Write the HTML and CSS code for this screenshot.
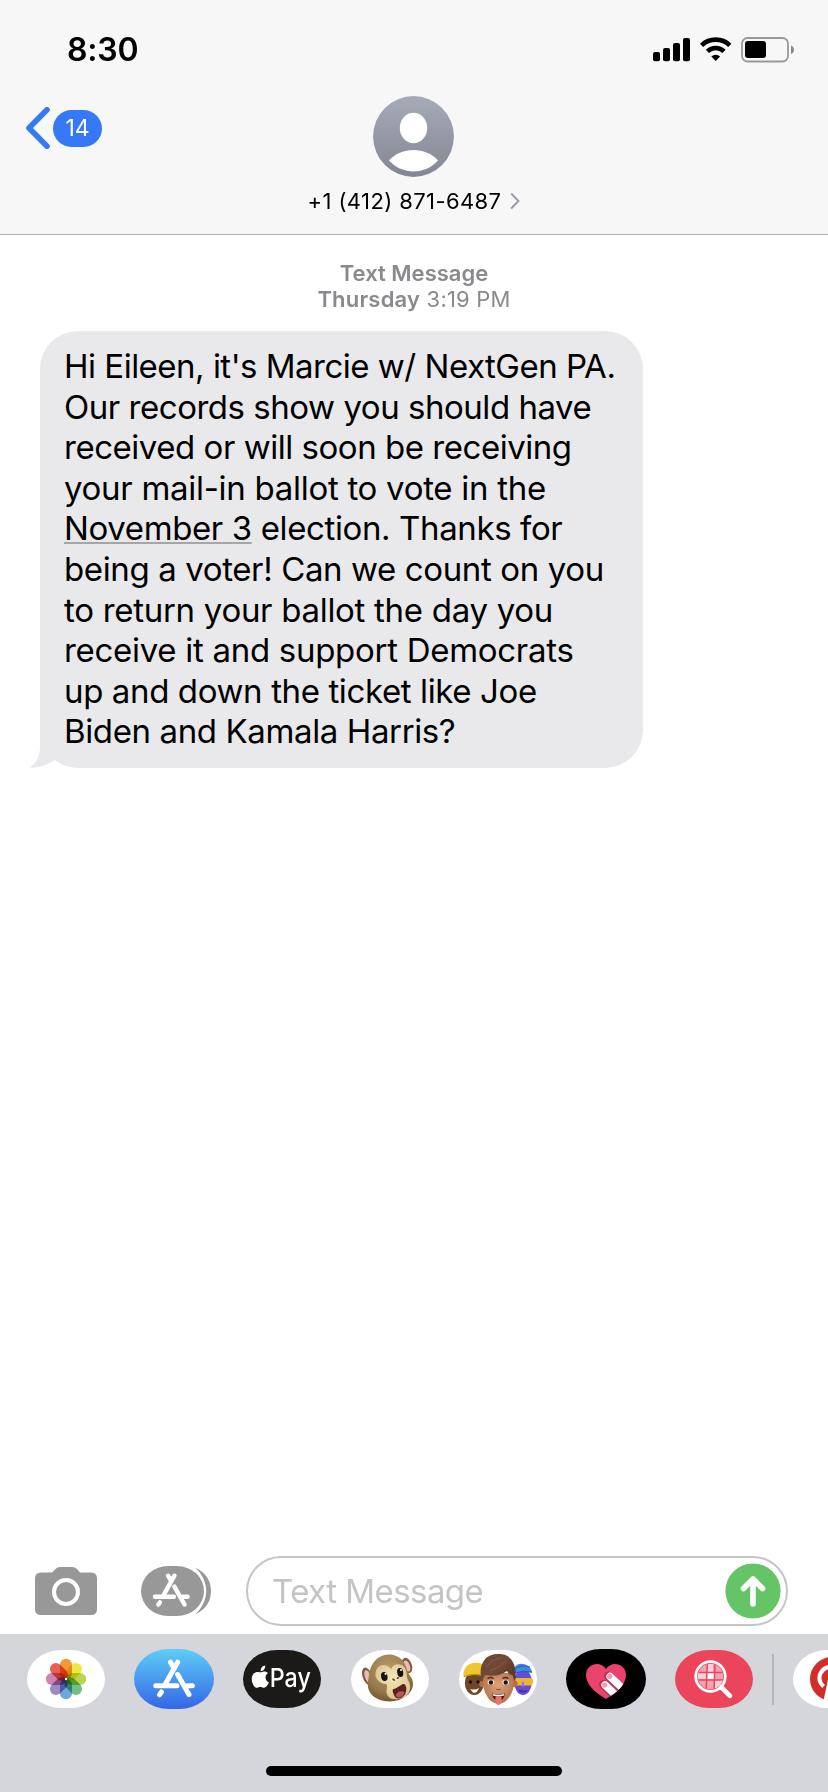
FILE: index.html
```html
<!DOCTYPE html>
<html lang="en">
<head>
<meta charset="utf-8">
<title>Messages</title>
<link rel="stylesheet" href="styles.css">
</head>
<body>
<svg width="0" height="0" class="defs">
  <defs>
    <linearGradient id="blue" x1="0" y1="0" x2="0" y2="1"><stop offset="0" stop-color="#60cdf7"/><stop offset="1" stop-color="#3466e6"/></linearGradient>
    <linearGradient id="grey" x1="0" y1="0" x2="0" y2="1"><stop offset="0" stop-color="#a6abb9"/><stop offset="1" stop-color="#838791"/></linearGradient>
    <radialGradient id="fur" cx=".45" cy=".3" r=".75"><stop offset="0" stop-color="#b59a68"/><stop offset=".65" stop-color="#98794a"/><stop offset="1" stop-color="#6d512e"/></radialGradient>
    <radialGradient id="cream" cx=".5" cy=".4" r=".7"><stop offset="0" stop-color="#f5e6bd"/><stop offset="1" stop-color="#d8bd87"/></radialGradient>
    <linearGradient id="hair" x1="0" y1="0" x2="1" y2="1"><stop offset="0" stop-color="#6d4834"/><stop offset=".5" stop-color="#704935"/><stop offset="1" stop-color="#4c2f22"/></linearGradient>
    <radialGradient id="skin" cx=".5" cy=".4" r=".65"><stop offset="0" stop-color="#dfa27a"/><stop offset="1" stop-color="#ad6c46"/></radialGradient>
    <g id="store" fill="none" stroke="#fff" stroke-width="5" stroke-linecap="round">
      <path d="M36.5 13.2 40.2 19.5M43.6 13.2 31 35.8M21.8 36.7H43M53 36.7H58.4M27.4 43 25.6 45.6"/>
      <path d="M43.6 25.5 55 45.5"/>
    </g>
    <clipPath id="heartclip"><path d="M40 50C28 43 20 35 20 26c0-11 14-15 20-6 6-9 20-5 20 6 0 9-8 17-20 24z"/></clipPath>
    <clipPath id="lens"><circle cx="36.5" cy="27.5" r="12.8"/></clipPath>
  </defs>
</svg>
<div class="screen">
  <header class="header">
    <div class="status">
      <span class="time">8:30</span>
      <svg class="status-icons" width="142" height="26" viewBox="653 37 142 26">
        <rect x="653" y="52" width="7" height="9.2" rx="2"/><rect x="663" y="48" width="7" height="13.2" rx="2"/><rect x="673" y="43" width="7" height="18.2" rx="2"/><rect x="683" y="38" width="7" height="23.2" rx="2"/>
        <path d="M701.6 45.4a20.2 20.2 0 0 1 28.2 0M707.4 51.4a12 12 0 0 1 16.6 0" fill="none" stroke="#000" stroke-width="4.6"/>
        <path d="M711.3 56.4a6.7 6.7 0 0 1 8.8 0L715.7 61z"/>
        <rect x="742" y="38" width="46" height="23.5" rx="5.5" fill="none" stroke="#999" stroke-width="1.8"/>
        <rect x="745" y="41" width="21" height="17" rx="3"/>
        <path d="M791 45.5c4 1.500 4 7 0 8.500z" fill="#888"/>
      </svg>
    </div>
    <div class="nav">
      <div class="back">
        <svg width="26" height="42" viewBox="0 0 26 42"><path d="M21 2.800 3 21 21 39.200" fill="none" stroke="#3579f6" stroke-width="5.600" stroke-linecap="round" stroke-linejoin="round"/></svg>
        <span class="badge">14</span>
      </div>
      <div class="contact">
        <svg class="avatar" width="81" height="81" viewBox="0 0 81 81"><circle cx="40.500" cy="40.500" r="40.400" fill="url(#grey)"/><ellipse cx="40.500" cy="32" rx="13.700" ry="15.200" fill="#fff"/><path d="M16 64.500C28 50.500 53 50.500 65 64.500 52 79 29 79 16 64.500z" fill="#fff"/></svg>
        <div class="number"><span>+1 (412) 871-6487</span>
          <svg width="10" height="18" viewBox="0 0 10 18"><path d="M1.200 1.500 8.500 9 1.200 16.500" fill="none" stroke="#9498a5" stroke-width="1.800"/></svg>
        </div>
      </div>
    </div>
  </header>
  <main class="thread">
    <div class="stamp"><b>Text Message</b><span class="when"><b>Thursday</b> 3:19 PM</span></div>
    <div class="bubble">
      <svg class="tail" width="35" height="50" viewBox="0 0 35 50"><path d="M11 0V30C10.500 39 7 46 0 49.500c9 .8 17-2 25-7L35 32V0z" fill="#e9e9eb"/></svg>
      <div class="tight">Hi Eileen, it's Marcie w/ NextGen PA.</div>
      <div class="snug">Our records show you should have</div>
      <div class="snug">received or will soon be receiving</div>
      <div class="loose">your mail-in ballot to vote in the</div>
      <div class="medium"><span class="date">November 3</span> election. Thanks for</div>
      <div class="medium">being a voter! Can we count on you</div>
      <div class="loose">to return your ballot the day you</div>
      <div class="loose">receive it and support Democrats</div>
      <div class="medium">up and down the ticket like Joe</div>
      <div class="medium">Biden and Kamala Harris?</div>
    </div>
  </main>
  <div class="compose">
    <svg class="camera" width="62" height="48" viewBox="0 0 62 48"><path d="M6 5.500H17L20.500 2Q22.500 0 25 0H37Q40 0 42 2L45 5.500H56Q62 5.500 62 11.500V42Q62 48 56 48H6Q0 48 0 42V11.500Q0 5.500 6 5.500z" fill="#989898"/><circle cx="31" cy="25" r="12" fill="none" stroke="#fff" stroke-width="4"/></svg>
    <svg class="apps" width="70" height="50" viewBox="0 0 70 50"><path d="M54 1.500C66 7 70 16 70 25S66 43 54 48.500C69 35 69 15 54 1.500z" fill="#989898"/><rect width="63" height="50" rx="27" ry="25" fill="#989898"/><use href="#store" transform="translate(-5.400 -2) scale(.89)"/></svg>
    <div class="field"><span>Text Message</span>
      <svg width="56" height="56" viewBox="0 0 56 56"><circle cx="28" cy="28" r="27.600" fill="#65c466"/><path d="M28 41V16M18.500 25.500 28 16l9.500 9.500" fill="none" stroke="#fff" stroke-width="5.600" stroke-linecap="round" stroke-linejoin="round"/></svg>
    </div>
  </div>
  <footer class="dock">
    <div class="strip">
      <svg class="app" viewBox="0 0 80 60"><rect class="pill" x="1" y="1" width="78" height="58" rx="34" ry="29" fill="#fff"/>
        <g class="petals">
          <rect x="34" y="9.800" width="12" height="20.200" rx="6" fill="#f19a38"/>
          <rect x="34" y="9.800" width="12" height="20.200" rx="6" fill="#f2e73c" transform="rotate(45 40 30)"/>
          <rect x="34" y="9.800" width="12" height="20.200" rx="6" fill="#b8d554" transform="rotate(90 40 30)"/>
          <rect x="34" y="9.800" width="12" height="20.200" rx="6" fill="#74be8c" transform="rotate(135 40 30)"/>
          <rect x="34" y="9.800" width="12" height="20.200" rx="6" fill="#70a7dc" transform="rotate(180 40 30)"/>
          <rect x="34" y="9.800" width="12" height="20.200" rx="6" fill="#9e8ac2" transform="rotate(225 40 30)"/>
          <rect x="34" y="9.800" width="12" height="20.200" rx="6" fill="#cc85b0" transform="rotate(270 40 30)"/>
          <rect x="34" y="9.800" width="12" height="20.200" rx="6" fill="#e76058" transform="rotate(315 40 30)"/>
        </g><circle cx="40" cy="30" r="1.200" fill="#fff"/></svg>
      <svg class="app" viewBox="0 0 80 60"><rect width="80" height="60" rx="35" ry="30" fill="url(#blue)"/><use href="#store"/></svg>
      <svg class="app" viewBox="0 0 80 60"><rect x="1" y="1" width="78" height="58" rx="34" ry="29" fill="#1b1a18"/>
        <path d="M19.400 23.300c2-1.200 5-1.200 6.600.8-3.700 2.600-3 7.800.9 9.500-1.400 3.200-3 5.200-4.800 5.200-1.500 0-2-.8-3.800-.8s-2.300.8-3.700.8C11.400 38.800 7 29 12 24.300c2.500-2 4.700-1.400 7.400-1z" fill="#fff"/><path d="M18.600 22.300c-.1-3.300 2-5.500 4.600-5.800.2 3.200-1.900 5.600-4.600 5.800z" fill="#fff"/>
        <text class="pay" x="27.800" y="38" textLength="41" lengthAdjust="spacingAndGlyphs">Pay</text></svg>
      <svg class="app" viewBox="0 0 80 60"><rect x="1" y="1" width="78" height="58" rx="34" ry="29" fill="#fff"/>
        <ellipse cx="17.500" cy="27.500" rx="4.800" ry="9.300" fill="#7c6139" transform="rotate(-20 17.500 27.500)"/><ellipse cx="18" cy="27.800" rx="3" ry="7" fill="#f0b8ba" transform="rotate(-20 18 27.800)"/>
        <ellipse cx="57" cy="16.500" rx="4.800" ry="8" fill="#7c6139" transform="rotate(-20 57 16.500)"/><ellipse cx="57" cy="17" rx="2.800" ry="5.800" fill="#f0b8ba" transform="rotate(-20 57 17)"/>
        <path d="M33 6.500C45 3 55 10 57 21c1 5 6 7 6 14 0 8-7 13-14 16-10 3-21 1-27-5-6-7-4-12-3-20 1-9 6-17 14-19.500z" fill="url(#fur)"/>
        <path d="M41 20c4-8 15-5 15.500 4 .2 3 .5 5 2 8 5 10-2 17-10 18-8 1-12-2-12-8 0-3 1-5 0-7-6 0-12-5-11-11 1-8 10-11 15.500-4z" fill="url(#cream)"/>
        <ellipse cx="34.300" cy="27.500" rx="3.200" ry="4.600" fill="#16130f" transform="rotate(-10 34.300 27.500)"/><ellipse cx="50.200" cy="23.500" rx="3" ry="4.500" fill="#16130f" transform="rotate(-10 50.200 23.500)"/>
        <circle cx="35.600" cy="24.800" r="1.100" fill="#fff"/><circle cx="51" cy="21" r="1" fill="#fff"/>
        <path d="M43 30.200l1.200.8M47.500 29.200l.8-.6" stroke="#684b2b" stroke-width="1.700" stroke-linecap="round"/>
        <path d="M43.500 40c4-.5 7-4.500 10-5 3 0 4 7 1 11-4 5-9 4-10 1-.8-2-3-6-1-7z" fill="#5c211f"/><path d="M45.500 47c1-4 5-6 9-4-1 5-6 7-9 4z" fill="#b35a56"/></svg>
      <svg class="app" viewBox="0 0 80 60"><rect x="1" y="1" width="78" height="58" rx="34" ry="29" fill="#fff"/>
        <ellipse cx="16.300" cy="34" rx="9.500" ry="12" fill="#714527"/><path d="M5.500 28C4 11 24 11 28 19V27q-10-3.500-22.500 1z" fill="#f0c62f"/><path d="M6 27.500q10-4 20-.5" fill="none" stroke="#c99713" stroke-width="1.200"/><circle cx="12.500" cy="33" r="1.700" fill="#1d130f"/><circle cx="20" cy="33" r="1.700" fill="#1d130f"/><path d="M12 40q5 1.500 9-1-2 6-6 4.500z" fill="#fff"/>
        <ellipse cx="65" cy="33" rx="8.800" ry="13" fill="#674bd3"/><path d="M55 25C55 9 74 14 74 24q-9-3-19 1z" fill="#3f89e0"/><path d="M56 20q8-5 16-2M57 24q8-3 17-1" stroke="#2460b8" fill="none"/><rect x="55" y="29" width="20" height="7.500" rx="3" fill="#efb436"/><path d="M61 41.500q5 2 8 0" stroke="#3f278f" stroke-width="1.500" fill="none"/><path d="M65 33v5" stroke="#8b72ed" stroke-width="2"/>
        <circle cx="24.500" cy="35" r="3.200" fill="#b57049"/><circle cx="56.500" cy="35" r="3.200" fill="#b57049"/>
        <path d="M25 24H56C58 41 51 54 40.500 55 30 54 23 41 25 24z" fill="url(#skin)"/>
        <path d="M23.800 33C20 18 25 5 40 5 53 4 60 16 57 33L54.500 26Q51 26 49 22 40 28.500 27 26z" fill="url(#hair)"/><path d="M28 18Q34 10 43 9M32 22Q43 18 48 12" fill="none" stroke="#8f624a" stroke-width=".7"/>
        <path d="M29.500 29.500q3-2 6 0M44.500 29.500q3-2 6 0" fill="none" stroke="#4b2c1e" stroke-width="1.500"/><ellipse cx="33" cy="33.500" rx="3.300" ry="2.400" fill="#fff"/><ellipse cx="47.700" cy="33.500" rx="3.300" ry="2.400" fill="#fff"/><circle cx="33" cy="33.500" r="2.200" fill="#20140f"/><circle cx="47.700" cy="33.500" r="2.200" fill="#20140f"/><path d="M38.500 40q2 1.500 4 0" fill="none" stroke="#8e5033" stroke-width="1.200"/>
        <path d="M34 44.500Q40.500 47 47 44.500q-1 7-6.500 7T34 44.500z" fill="#431714"/><path d="M34.800 45Q40.500 47 46.200 45v1.500q-5.700 2-11.400 0z" fill="#fff"/><path d="M37.500 48q3-2 6 0c.5 4 0 8-3 8s-3.500-4-3-8z" fill="#e9736f"/></svg>
      <svg class="app" viewBox="0 0 80 60"><rect width="80" height="60" rx="35" ry="30"/>
        <path d="M40 50C28 43 20 35 20 26c0-11 14-15 20-6 6-9 20-5 20 6 0 9-8 17-20 24z" fill="#ea436c"/>
        <g clip-path="url(#heartclip)"><path d="M42.500 27 62 45M37.500 35.500 56 53" stroke="#b93155" stroke-width="9" stroke-linecap="round"/><path d="M44 27.500 63 45.500M39 36 58 54" stroke="#fff" stroke-width="7.400" stroke-linecap="round"/><circle cx="43.700" cy="27.300" r="2.600" fill="#f19bb1"/><circle cx="38.700" cy="36" r="2.600" fill="#f19bb1"/></g></svg>
      <svg class="app" viewBox="0 0 80 60"><rect x="1" y="1" width="78" height="58" rx="34" ry="29" fill="#ea455b"/>
        <g clip-path="url(#lens)"><path d="M23 14h27v27H23z" fill="#f3a3b0"/><path d="M23 24h9v6h-9zM33 15h6v8h-6zM41 31h8v8h-8z" fill="#f9d0d8"/><path d="M33 24h7v6h-7z" fill="#fff"/><path d="M22 23.500H50M22 31H50M33.500 13 32 42M41 13 40 42" stroke="#ea455b" stroke-width="1.500"/></g>
        <circle cx="36.500" cy="27.500" r="14.800" fill="none" stroke="#fff" stroke-width="2.700"/><path d="M47.500 38.500 56 46.800" stroke="#fff" stroke-width="4.600" stroke-linecap="round"/></svg>
      <span class="divider"></span>
      <svg class="app" viewBox="0 0 80 60"><rect x="1" y="1" width="78" height="58" rx="34" ry="29" fill="#fff"/><circle cx="40" cy="30" r="22" fill="#cf2e2b"/><path d="M31.500 37.500C23 29 29 17.500 40.500 17.500S54 25 52 32s-10 8-12 4M39 26 33.500 52" fill="none" stroke="#fff" stroke-width="4"/></svg>
    </div>
    <div class="home"></div>
  </footer>
</div>
</body>
</html>
```
FILE: styles.css
```css
* { box-sizing: border-box; }
body { margin: 0; background: #fff; font-family: Inter, "Liberation Sans", sans-serif; color: #000; }
.defs { position: absolute; }
svg { display: block; flex: none; }
.screen { width: 828px; height: 1792px; display: flex; flex-direction: column; overflow: hidden; background: #fff; }
.header { height: 235px; flex: none; background: #f7f7f7; border-bottom: 1px solid #b0b0b2; }
.status { height: 96px; padding: 30px 33px 0 67px; display: flex; justify-content: space-between; align-items: flex-start; }
.time { font-size: 32px; line-height: 40px; font-weight: 600; letter-spacing: -.2px; }
.status-icons { margin-top: 7px; }
.nav { display: grid; grid-template-columns: 1fr auto 1fr; align-items: start; }
.back { display: flex; align-items: center; padding: 11px 0 0 26px; gap: 1px; }
.badge { width: 49px; height: 37px; border-radius: 18.500px; background: #3579f6; color: #fff; font-size: 23px; line-height: 37px; text-align: center; }
.contact { display: flex; flex-direction: column; align-items: center; }
.number { display: flex; align-items: center; gap: 9px; margin-top: 10px; font-size: 22px; line-height: 28px; letter-spacing: .4px; }
.thread { flex: 1; padding: 25px 0 0; }
.stamp { display: flex; flex-direction: column; align-items: center; font-size: 22px; line-height: 26px; color: #8a8a8e; height: 71px; }
.stamp b { font-weight: 600; }
.when { letter-spacing: .2px; }
.bubble { position: relative; margin-left: 40px; width: 603px; height: 437px; padding: 15px 0 0 24px; border-radius: 38px; background: #e9e9eb; font-size: 33px; line-height: 40.600px; white-space: nowrap; }
.tail { position: absolute; left: -11px; bottom: 0; }
.tight { letter-spacing: -.5px; }
.snug { letter-spacing: -.47px; }
.medium { letter-spacing: -.38px; }
.loose { letter-spacing: -.29px; }
.date { text-decoration: underline; text-decoration-color: #a5a6a8; text-decoration-thickness: 2px; text-underline-offset: 2px; text-decoration-skip-ink: none; }
.compose { height: 79px; flex: none; display: flex; align-items: flex-start; padding-left: 35px; }
.camera { margin-top: 12px; }
.apps { margin: 11px 35px 0 44px; }
.field { width: 542px; height: 70px; margin-top: 1px; border: 2px solid #c5c5c7; border-radius: 35px; display: flex; align-items: center; justify-content: space-between; padding: 0 5px 0 24px; color: #c4c4c6; font-size: 33px; letter-spacing: -.55px; }
.dock { height: 158px; flex: none; background: #d5d6dc; padding-top: 15px; display: flex; flex-direction: column; align-items: center; }
.strip { align-self: stretch; display: flex; align-items: center; gap: 28px; padding-left: 26px; overflow: hidden; }
.app { width: 80px; height: 60px; }
.petals rect { mix-blend-mode: multiply; }
.petals { isolation: isolate; }
.pay { font-size: 26px; font-weight: 500; fill: #fff; }
.divider { flex: none; width: 2px; height: 51px; margin: 0 -10px 0 -10px; background: #b4b5ba; }
.home { width: 296px; height: 10px; margin-top: 57px; border-radius: 5px; background: #000; }
```
